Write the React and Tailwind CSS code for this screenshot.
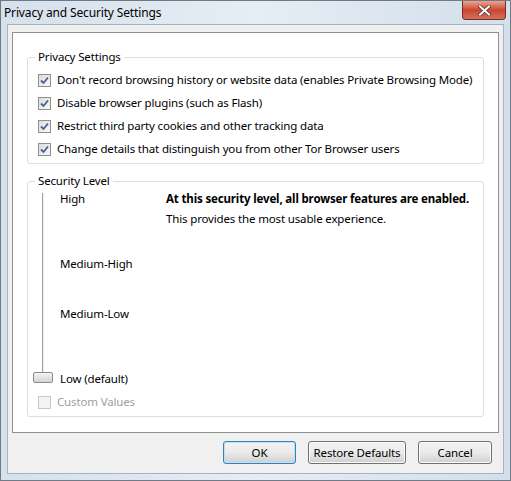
import { useState } from "react";

const PRIVACY = [
  "Don't record browsing history or website data (enables Private Browsing Mode)",
  "Disable browser plugins (such as Flash)",
  "Restrict third party cookies and other tracking data",
  "Change details that distinguish you from other Tor Browser users",
];

function Check({ checked, disabled }) {
  return (
    <span
      className={`flex h-[13px] w-[13px] shrink-0 items-center justify-center border ${
        disabled ? "border-[#c8c8c8] bg-[#f4f4f4]" : "border-[#8f8f8f] bg-gradient-to-br from-[#dcdcdc] to-[#f8f8f8]"
      }`}
    >
      {checked && (
        <svg width="9" height="9" viewBox="0 0 9 9">
          <path d="M1 4.5 L3.5 7 L8 1.5" fill="none" stroke="#4a5f97" strokeWidth="1.8" />
        </svg>
      )}
    </span>
  );
}

function WinButton({ children, primary, w }) {
  return (
    <button
      className={`h-[23px] rounded-[3px] border bg-gradient-to-b from-[#f2f2f2] via-[#ebebeb] to-[#cfcfcf] text-black ${w} ${
        primary ? "border-[#3c7fb1] shadow-[inset_0_0_0_1px_#b8e4f7]" : "border-[#707070] shadow-[inset_0_0_0_1px_#fbfbfb]"
      }`}
    >
      {children}
    </button>
  );
}

export default function App() {
  const [level] = useState("low");

  return (
    <div
      className="h-[481px] w-[511px] overflow-hidden bg-[#cfdbe7] text-[11.5px] tracking-[-0.15px] text-black"
      style={{ fontFamily: '"Noto Sans", "Open Sans", sans-serif' }}
    >
      <div className="flex h-full flex-col border border-[#6e7a86] bg-gradient-to-r from-[#d6e1ec] via-[#e6edf4] to-[#d3dfeb]">
        {/* title bar */}
        <div className="flex h-[23px] shrink-0 items-start justify-between">
          <span className="pl-[3px] pt-[5px] text-[12px] leading-[14px] text-black">Privacy and Security Settings</span>
          <div className="mr-[4px] flex h-[19px] w-[44px] items-center justify-center rounded-b-[4px] border border-t-0 border-[#7a2a22] bg-gradient-to-b from-[#e8a493] via-[#c9452f] to-[#d2705b]">
            <svg width="13" height="11" viewBox="0 0 13 11">
              <path d="M2 1.5 L11 9.5 M11 1.5 L2 9.5" stroke="#4c2a28" strokeWidth="3.4" strokeLinecap="square" />
              <path d="M2 1.5 L11 9.5 M11 1.5 L2 9.5" stroke="#ffffff" strokeWidth="2" strokeLinecap="square" />
            </svg>
          </div>
        </div>

        {/* client area */}
        <div className="mx-[6px] mb-[6px] flex flex-1 flex-col border border-[#a6b3c0] bg-[#f0f0f0] px-[4px] pt-[7px]">
          <div className="flex h-[401px] flex-col border border-[#8e8f8f] bg-white px-[14px] pt-[17px]">
            {/* privacy group */}
            <fieldset className="rounded-[3px] border border-[#d5dfe5] px-[10px] pb-[7px] pt-0">
              <legend className="ml-[-3px] px-[3px] leading-[14px]">Privacy Settings</legend>
              <div className="flex flex-col gap-[9px] pt-[9px]">
                {PRIVACY.map((t) => (
                  <label key={t} className="flex items-center gap-[6px] whitespace-nowrap leading-[14px]">
                    <Check checked />
                    <span>{t}</span>
                  </label>
                ))}
              </div>
            </fieldset>

            {/* security group */}
            <fieldset className="mt-[10px] h-[243px] rounded-[3px] border border-[#d5dfe5] px-[10px] pt-0">
              <legend className="ml-[-3px] px-[3px] leading-[14px]">Security Level</legend>
              <div className="flex pt-[4px]">
                <div className="relative w-[22px] shrink-0">
                  <div className="absolute left-[4px] top-[1px] h-[185px] w-[1px] bg-[#a0a0a0]" />
                  <div className="absolute left-[4px] top-[1px] h-[185px] w-[1px] translate-x-[1px] bg-[#f0f0f0]" />
                  {level === "low" && (
                    <div className="absolute left-[-5px] top-[180px] h-[11px] w-[20px] rounded-[2px] border border-[#8b8b8b] bg-gradient-to-b from-[#f4f4f4] to-[#d4d4d4]" />
                  )}
                </div>
                <div className="flex w-[106px] shrink-0 flex-col leading-[14px]">
                  <span className="h-[65px]">High</span>
                  <span className="h-[50px]">Medium-High</span>
                  <span className="h-[65px]">Medium-Low</span>
                  <span>Low (default)</span>
                </div>
                <div className="flex flex-col whitespace-nowrap leading-[14px]">
                  <span className="font-bold">At this security level, all browser features are enabled.</span>
                  <span className="mt-[6px]">This provides the most usable experience.</span>
                </div>
              </div>
              <label className="mt-[9px] flex items-center gap-[6px] leading-[14px] text-[#a0a0a0]">
                <Check disabled />
                <span>Custom Values</span>
              </label>
            </fieldset>
          </div>

          {/* buttons */}
          <div className="flex justify-end gap-[12px] pr-[7px] pt-[8px]">
            <WinButton primary w="w-[73px]">OK</WinButton>
            <WinButton w="w-[98px]">Restore Defaults</WinButton>
            <WinButton w="w-[74px]">Cancel</WinButton>
          </div>
        </div>
      </div>
    </div>
  );
}
